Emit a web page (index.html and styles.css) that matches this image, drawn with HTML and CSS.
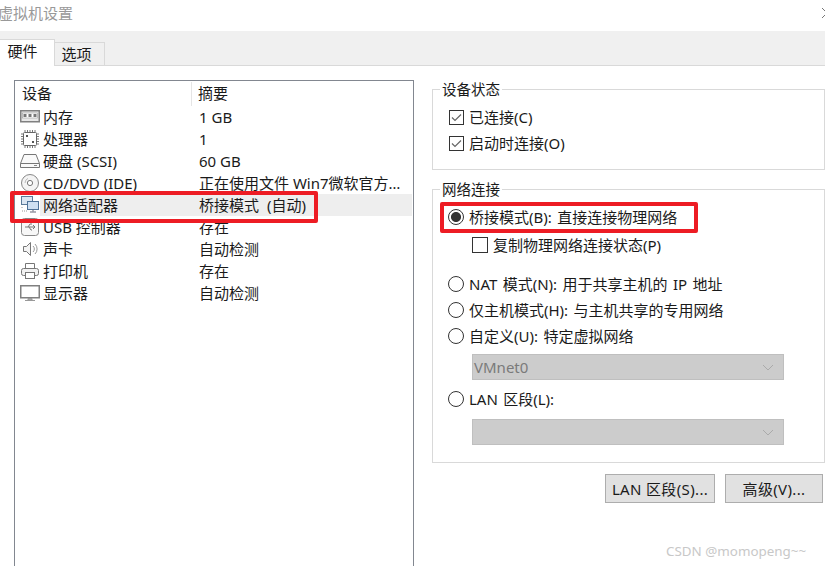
FILE: index.html
```html
<!DOCTYPE html>
<html lang="zh-CN">

<head>
    <meta charset="UTF-8">
    <meta name="viewport" content="width=device-width, initial-scale=1.0">
    <title>虚拟机设置</title>
    <link rel="stylesheet" href="styles.css">
</head>

<body>
    <div class="window">
        <header class="titlebar">
            <h1>虚拟机设置</h1>
            <svg class="close" width="12" height="12" viewBox="0 0 12 12">
                <path d="M1 1l10 10M11 1L1 11" stroke="#777" stroke-width="1" fill="none" />
            </svg>
        </header>

        <div class="tabs">
            <div class="tab active">硬件</div>
            <div class="tab">选项</div>
        </div>

        <div class="content">
            <div class="devices">
                <div class="list-head">
                    <div class="col-name">设备</div>
                    <div class="col-summary">摘要</div>
                </div>

                <div class="row">
                    <svg class="icon" viewBox="0 0 20 18">
                        <rect x="0.75" y="2.75" width="18.5" height="11" fill="#e8e8e8" stroke="#808080" stroke-width="1.5" />
                        <rect x="2.5" y="5" width="15" height="5" fill="#fff" stroke="#999" stroke-width="0.6" />
                        <path d="M3.5 6h3v3h-3zM8.5 6h3v3h-3zM13.5 6h3v3h-3z" fill="#777" />
                    </svg>
                    <div class="col-name">内存</div>
                    <div class="col-summary">1 GB</div>
                </div>
                <div class="row">
                    <svg class="icon" viewBox="0 0 20 18">
                        <rect x="3.5" y="2.5" width="13" height="13" rx="1" fill="#fff" stroke="#666" />
                        <path d="M1 4h2M1 6.5h2M1 9h2M1 11.5h2M1 14h2M17 4h2M17 6.5h2M17 9h2M17 11.5h2M17 14h2" stroke="#777" />
                        <path d="M5 0v2M7.5 0v2M10 0v2M12.5 0v2M15 0v2M5 16v2M7.5 16v2M10 16v2M12.5 16v2M15 16v2" stroke="#777" />
                        <rect x="6" y="5" width="2" height="2" fill="#555" />
                        <rect x="12" y="11" width="2" height="2" fill="#555" />
                    </svg>
                    <div class="col-name">处理器</div>
                    <div class="col-summary">1</div>
                </div>
                <div class="row">
                    <svg class="icon" viewBox="0 0 20 18">
                        <path d="M4 2.5h12l3.5 9v4H0.5v-4z" fill="#fafafa" stroke="#777" />
                        <path d="M0.5 11.5h19" stroke="#777" />
                        <path d="M14 13.5h3" stroke="#888" />
                    </svg>
                    <div class="col-name">硬盘 (SCSI)</div>
                    <div class="col-summary">60 GB</div>
                </div>
                <div class="row">
                    <svg class="icon" viewBox="0 0 20 18">
                        <circle cx="10" cy="9" r="8.5" fill="#f4f4f4" stroke="#888" />
                        <circle cx="10" cy="9" r="2.6" fill="#fff" stroke="#777" />
                        <path d="M5 9a5 5 0 0 1 3-4.6" stroke="#bbb" fill="none" />
                    </svg>
                    <div class="col-name">CD/DVD (IDE)</div>
                    <div class="col-summary">正在使用文件 Win7微软官方…</div>
                </div>
                <div class="row selected">
                    <svg class="icon" viewBox="0 0 20 18">
                        <rect x="1.5" y="0.5" width="11" height="8" fill="#dbe6f2" stroke="#5b7a99" />
                        <rect x="7.5" y="5.5" width="11" height="8" fill="#cfe0f2" stroke="#4f7399" />
                        <path d="M13 13.5v2M10 16h6" stroke="#667" />
                        <path d="M2 11v2M2 15h5" stroke="#999" stroke-dasharray="1 1" />
                    </svg>
                    <div class="col-name">网络适配器</div>
                    <div class="col-summary">桥接模式 (自动)</div>
                </div>
                <div class="row">
                    <svg class="icon" viewBox="0 0 20 18">
                        <rect x="1.5" y="0.5" width="17" height="17" rx="3" fill="#f7f7f7" stroke="#888" />
                        <path d="M5 9h10M13 7l2 2-2 2M8 9l2-3h2M9 9l2 3h1" stroke="#777" fill="none" />
                    </svg>
                    <div class="col-name">USB 控制器</div>
                    <div class="col-summary">存在</div>
                </div>
                <div class="row">
                    <svg class="icon" viewBox="0 0 20 18">
                        <path d="M3.5 6.5h3l4-4v13l-4-4h-3z" fill="#f4f4f4" stroke="#777" />
                        <path d="M13 6a4 4 0 0 1 0 6M15 4a7 7 0 0 1 0 10" stroke="#999" fill="none" />
                    </svg>
                    <div class="col-name">声卡</div>
                    <div class="col-summary">自动检测</div>
                </div>
                <div class="row">
                    <svg class="icon" viewBox="0 0 20 18">
                        <path d="M5.5 6V1.5h9V6" fill="#fff" stroke="#777" />
                        <rect x="1.5" y="6.5" width="17" height="7" rx="2" fill="#f2f2f2" stroke="#777" />
                        <rect x="5.5" y="10.5" width="9" height="6" fill="#fff" stroke="#777" />
                    </svg>
                    <div class="col-name">打印机</div>
                    <div class="col-summary">存在</div>
                </div>
                <div class="row">
                    <svg class="icon" viewBox="0 0 20 18">
                        <rect x="0.75" y="1.75" width="18.5" height="12" fill="#fff" stroke="#808080" stroke-width="1.5" />
                        <path d="M8 14.5h4v1.5H8zM5 16.5h10" stroke="#999" fill="#bbb" />
                    </svg>
                    <div class="col-name">显示器</div>
                    <div class="col-summary">自动检测</div>
                </div>
            </div>

            <div class="side">
                <div class="group status">
                    <div class="legend">设备状态</div>
                    <div class="option">
                        <span class="check">
                            <svg width="11" height="9" viewBox="0 0 11 9">
                                <path d="M1 4.5l3 3 6-6" stroke="#666" stroke-width="1.2" fill="none" />
                            </svg>
                        </span>
                        <span>已连接(C)</span>
                    </div>
                    <div class="option">
                        <span class="check">
                            <svg width="11" height="9" viewBox="0 0 11 9">
                                <path d="M1 4.5l3 3 6-6" stroke="#666" stroke-width="1.2" fill="none" />
                            </svg>
                        </span>
                        <span>启动时连接(O)</span>
                    </div>
                </div>

                <div class="group network">
                    <div class="legend">网络连接</div>
                    <div class="option"><span class="radio on"></span><span>桥接模式(B): 直接连接物理网络</span></div>
                    <div class="option replicate"><span class="check"></span><span>复制物理网络连接状态(P)</span></div>
                    <div class="option nat"><span class="radio"></span><span>NAT 模式(N): 用于共享主机的 IP 地址</span></div>
                    <div class="option"><span class="radio"></span><span>仅主机模式(H): 与主机共享的专用网络</span></div>
                    <div class="option"><span class="radio"></span><span>自定义(U): 特定虚拟网络</span></div>
                    <div class="select vmnet">VMnet0
                        <svg width="12" height="7" viewBox="0 0 12 7">
                            <path d="M1 1l5 5 5-5" stroke="#aaa" fill="none" />
                        </svg>
                    </div>
                    <div class="option lan"><span class="radio"></span><span>LAN 区段(L):</span></div>
                    <div class="select">
                        <svg width="12" height="7" viewBox="0 0 12 7">
                            <path d="M1 1l5 5 5-5" stroke="#aaa" fill="none" />
                        </svg>
                    </div>
                </div>

                <div class="buttons">
                    <button class="lan-button">LAN 区段(S)...</button>
                    <button class="adv-button">高级(V)...</button>
                </div>
            </div>
        </div>

        <!-- red marks drawn over the screenshot -->
        <div class="mark mark-row"></div>
        <div class="mark mark-option"></div>
        <div class="watermark">CSDN @momopeng~~</div>
    </div>
</body>

</html>
```

FILE: styles.css
```css
* {
    box-sizing: border-box;
}

body {
    margin: 0;
    background: white;
    font-family: "Noto Sans", "Noto Sans CJK SC", sans-serif;
    font-size: 15px;
    color: #1a1a1a;
}

.window {
    position: relative;
    width: 825px;
    height: 566px;
    overflow: hidden;
    display: flex;
    flex-direction: column;
}

.titlebar {
    height: 31px;
    flex: none;
    display: flex;
    justify-content: space-between;
    align-items: center;
    padding-bottom: 6px;
}

.titlebar h1 {
    margin: 0 0 0 -2px;
    font-size: 15px;
    font-weight: normal;
    line-height: 20px;
    color: #999;
}

.close {
    flex: none;
    margin-right: -8px;
}

.tabs {
    height: 35px;
    flex: none;
    display: flex;
    align-items: flex-end;
    background: #f0f0f0;
    border-bottom: 1px solid #d9d9d9;
}

.tab {
    width: 50px;
    height: 24px;
    margin-bottom: -1px;
    border: 1px solid #d9d9d9;
    border-left: none;
    padding-right: 6px;
    text-align: center;
    line-height: 22px;
}

.tab.active {
    width: 55px;
    height: 27px;
    background: white;
    border-bottom: none;
    line-height: 22px;
    padding-right: 9px;
}

.content {
    flex: 1;
    display: flex;
    padding: 14px 0 0 14px;
}

.devices {
    width: 400px;
    height: 520px;
    flex: none;
    border: 1px solid #828790;
    border-bottom: none;
    padding: 1px;
}

.list-head {
    display: flex;
    height: 24px;
    line-height: 22px;
    padding-left: 6px;
}

.list-head .col-name {
    width: 170px;
    border-right: 1px solid #e5e5e5;
}

.list-head .col-summary {
    padding-left: 6px;
}

.row {
    display: flex;
    align-items: center;
    height: 22px;
}

.row.selected {
    background: linear-gradient(to right, white 24px, #eeeeee 24px);
}

.row.selected .col-summary {
    word-spacing: 4px;
}

.icon {
    width: 20px;
    height: 18px;
    flex: none;
    margin: 0 3px 0 4px;
}

.row .col-name {
    width: 156px;
    padding-bottom: 1px;
    white-space: nowrap;
}

.row .col-summary {
    padding-bottom: 1px;
    white-space: nowrap;
}

.side {
    width: 393px;
    flex: none;
    margin-left: 18px;
    padding-top: 9px;
}

.group {
    position: relative;
    border: 1px solid #d9d9d9;
}

.legend {
    position: absolute;
    top: -10px;
    left: 7px;
    padding: 0 2px;
    background: white;
    font-size: 14.5px;
    line-height: 18px;
}

.status {
    height: 81px;
    padding: 14px 0 0 16px;
}

.network {
    height: 274px;
    margin-top: 19px;
    padding: 14px 0 0 15px;
}

.option {
    display: flex;
    align-items: center;
    gap: 5px;
    height: 26px;
    white-space: nowrap;
    word-spacing: 1.5px;
}

.option span:last-child {
    padding-bottom: 1px;
}

.check {
    width: 15px;
    height: 15px;
    flex: none;
    display: flex;
    align-items: center;
    justify-content: center;
    border: 1px solid #333;
    background: white;
}

.radio {
    width: 16px;
    height: 16px;
    flex: none;
    border: 1px solid #333;
    border-radius: 50%;
    background: white;
}

.radio.on {
    background: radial-gradient(circle, #333 4.6px, white 5.4px);
}

.replicate {
    margin-left: 24px;
    margin-top: 2px;
}

.replicate .check {
    width: 16px;
    height: 16px;
}

.nat {
    margin-top: 13px;
}

.select {
    display: flex;
    align-items: center;
    justify-content: space-between;
    width: 312px;
    height: 26px;
    margin: 5px 0 0 24px;
    padding: 0 9px 0 1px;
    background: #cccccc;
    border: 1px solid #bfbfbf;
    color: #7a7a7a;
}

.select:last-child {
    justify-content: flex-end;
    margin-top: 7px;
}

.lan {
    margin-top: 6px;
}

.buttons {
    display: flex;
    gap: 10px;
    margin: 11px 0 0 173px;
}

button {
    height: 29px;
    padding: 0;
    background: #e1e1e1;
    border: 1px solid #adadad;
    font: inherit;
    letter-spacing: 0.35px;
    color: #1a1a1a;
}

.lan-button {
    width: 110px;
}

.adv-button {
    width: 98px;
}

.mark {
    position: absolute;
    border: 4px solid #ed1c24;
    border-radius: 2px;
}

.mark-row {
    left: 10px;
    top: 191px;
    width: 308px;
    height: 32px;
}

.mark-option {
    left: 440px;
    top: 202px;
    width: 258px;
    height: 31px;
}

.watermark {
    position: absolute;
    left: 666px;
    top: 542px;
    font-size: 13.4px;
    line-height: 18px;
    color: #c8c8c8;
}
```
